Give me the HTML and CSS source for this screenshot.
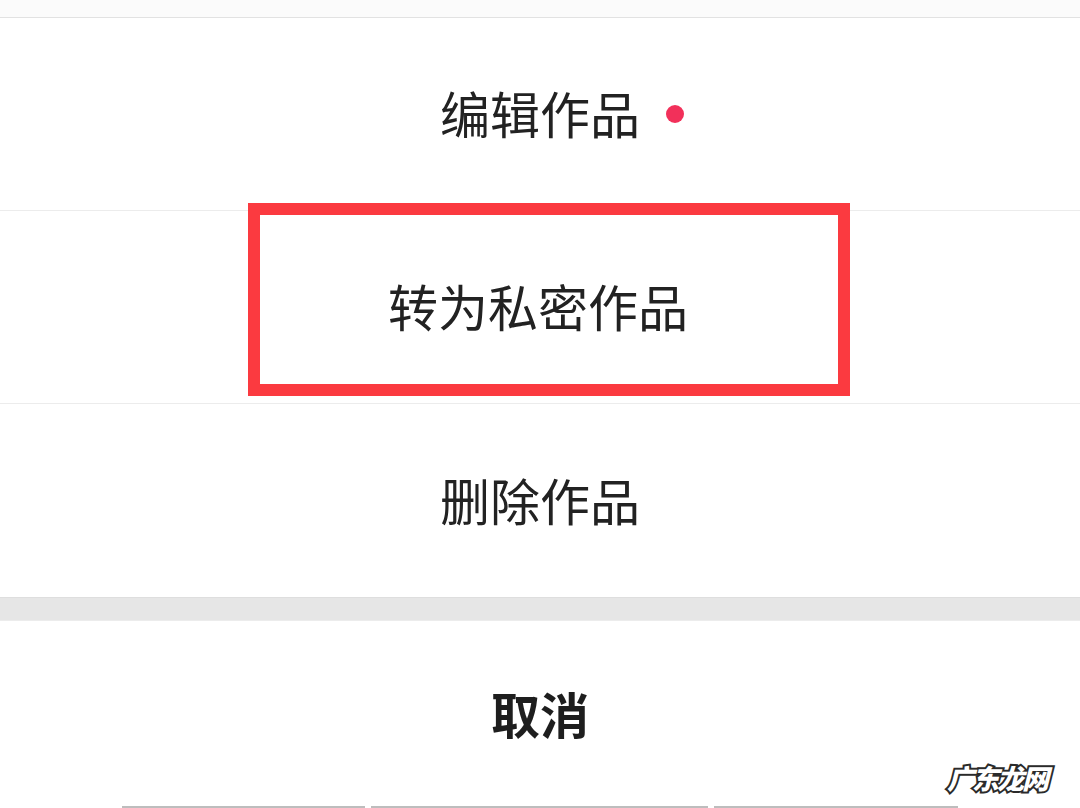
FILE: index.html
```html
<!DOCTYPE html>
<html lang="zh-CN">
	<head>
		<meta charset="utf-8">
		<title>作品操作</title>
		<link rel="stylesheet" href="styles.css">
	</head>
	<body>
		<div class="sheet">
			<div class="top-strip"></div>
			<ul class="actions">
				<li class="action">
					<span class="label">编辑作品<i class="dot"></i></span>
				</li>
				<li class="action highlighted">
					<span class="label">转为私密作品</span>
					<div class="mark"></div>
				</li>
				<li class="action">
					<span class="label">删除作品</span>
				</li>
			</ul>
			<div class="gap"></div>
			<div class="cancel">取消</div>
			<div class="home-bar">
				<span class="seg seg1"></span>
				<span class="seg seg2"></span>
				<span class="seg seg3"></span>
			</div>
			<div class="watermark">广东龙网</div>
		</div>
	</body>
</html>
```

FILE: styles.css
```css
body {
	margin: 0;
	background-color: #fff;
	font-family: "Noto Sans CJK SC", "Noto Sans", sans-serif;
	color: #222;
}
.sheet {
	position: relative;
	width: 1080px;
	height: 808px;
	overflow: hidden;
}
.top-strip {
	height: 17px;
	background-color: #fbfbfb;
	border-bottom: 1px solid #e2e2e2;
}
.actions {
	list-style: none;
	margin: 0;
	padding: 0;
}
.action {
	position: relative;
	height: 192px;
	display: flex;
	align-items: center;
	justify-content: center;
	border-bottom: 1px solid #ececec;
}
.action:last-child {
	border-bottom: none;
	height: 193px;
}
.label {
	position: relative;
	font-size: 50px;
	line-height: 1;
	top: -2px;
}
.dot {
	position: absolute;
	left: 226px;
	top: 18px;
	width: 18px;
	height: 18px;
	border-radius: 50%;
	background-color: #f2305a;
}
.mark {
	position: absolute;
	left: 248px;
	top: -8px;
	width: 578px;
	height: 169px;
	border: 12px solid #fb3a40;
}
.highlighted .label {
	left: -2px;
}
.gap {
	height: 22px;
	background-color: #e6e6e6;
	border-top: 1px solid #dedede;
	border-bottom: 1px solid #ececec;
}
.cancel {
	height: 183px;
	display: flex;
	align-items: center;
	justify-content: center;
	font-size: 49px;
	font-weight: 700;
	color: #1e1e1e;
	padding-bottom: 2px;
}
.home-bar {
	display: flex;
	gap: 6px;
	padding-left: 122px;
	height: 4px;
}
.seg {
	background-color: #bdbdbd;
	height: 4px;
}
.seg1 {
	width: 243px;
}
.seg2 {
	width: 337px;
}
.seg3 {
	width: 244px;
}
.watermark {
	position: absolute;
	left: 947px;
	top: 758px;
	font-size: 27px;
	font-weight: 900;
	font-style: italic;
	color: #fff;
	-webkit-text-stroke: 4px #2a2a2a;
	paint-order: stroke fill;
	letter-spacing: -2px;
}
```
